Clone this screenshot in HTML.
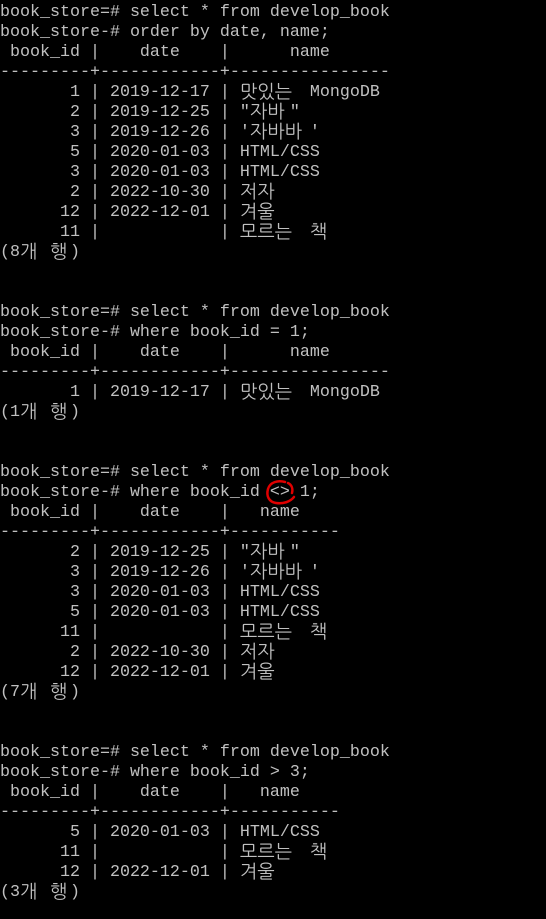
<!DOCTYPE html>
<html><head><meta charset="utf-8"><style>
html,body{margin:0;padding:0;background:#000;width:546px;height:919px;overflow:hidden}
pre{position:absolute;left:0;top:3px;margin:0;font-family:"Liberation Mono",monospace;font-size:16.67px;line-height:20px;color:#c0c0c0;white-space:pre}
.k{display:inline-block;font-family:"NanumGothic","Noto Sans CJK KR",sans-serif;font-size:18.5px;line-height:20px;vertical-align:top;overflow:hidden;position:relative;top:-1px}
.k1{width:20px}.k2{width:40px}.k3{width:60px}
</style></head><body>
<pre>book_store=# select * from develop_book
book_store-# order by date, name;
 book_id |    date    |      name
---------+------------+----------------
       1 | 2019-12-17 | <span class="k k3">맛있는</span> MongoDB
       2 | 2019-12-25 | "<span class="k k2">자바</span>"
       3 | 2019-12-26 | '<span class="k k3">자바바</span>'
       5 | 2020-01-03 | HTML/CSS
       3 | 2020-01-03 | HTML/CSS
       2 | 2022-10-30 | <span class="k k2">저자</span>
      12 | 2022-12-01 | <span class="k k2">겨울</span>
      11 |            | <span class="k k3">모르는</span> <span class="k k1">책</span>
(8<span class="k k1">개</span> <span class="k k1">행</span>)


book_store=# select * from develop_book
book_store-# where book_id = 1;
 book_id |    date    |      name
---------+------------+----------------
       1 | 2019-12-17 | <span class="k k3">맛있는</span> MongoDB
(1<span class="k k1">개</span> <span class="k k1">행</span>)


book_store=# select * from develop_book
book_store-# where book_id &lt;&gt; 1;
 book_id |    date    |   name
---------+------------+-----------
       2 | 2019-12-25 | "<span class="k k2">자바</span>"
       3 | 2019-12-26 | '<span class="k k3">자바바</span>'
       3 | 2020-01-03 | HTML/CSS
       5 | 2020-01-03 | HTML/CSS
      11 |            | <span class="k k3">모르는</span> <span class="k k1">책</span>
       2 | 2022-10-30 | <span class="k k2">저자</span>
      12 | 2022-12-01 | <span class="k k2">겨울</span>
(7<span class="k k1">개</span> <span class="k k1">행</span>)


book_store=# select * from develop_book
book_store-# where book_id &gt; 3;
 book_id |    date    |   name
---------+------------+-----------
       5 | 2020-01-03 | HTML/CSS
      11 |            | <span class="k k3">모르는</span> <span class="k k1">책</span>
      12 | 2022-12-01 | <span class="k k2">겨울</span>
(3<span class="k k1">개</span> <span class="k k1">행</span>)</pre>
<svg style="position:absolute;left:0;top:0" width="546" height="919">
<path d="M285 482 C278 480 270 482 268 489 C266 496 269 502 276 503 C283 504 290 502 294 497 M288 483 C292 485 293 489 292 493" fill="none" stroke="#e00000" stroke-width="2.5" stroke-linecap="round"/>
</svg>
</body></html>
